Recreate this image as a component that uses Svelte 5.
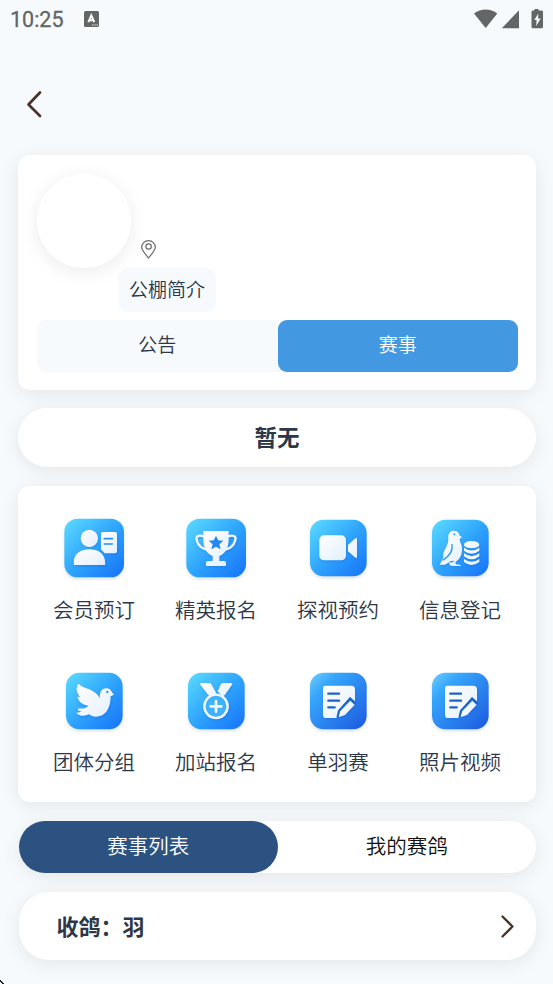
<script lang="ts">
	let section = $state('赛事');
	let tab = $state('赛事列表');

	const sections = ['公告', '赛事'];
	const tabs = ['赛事列表', '我的赛鸽'];

	const menu = [
		{ icon: 'member', label: '会员预订' },
		{ icon: 'trophy', label: '精英报名' },
		{ icon: 'video', label: '探视预约' },
		{ icon: 'register', label: '信息登记' },
		{ icon: 'dove', label: '团体分组' },
		{ icon: 'medal', label: '加站报名' },
		{ icon: 'note', label: '单羽赛' },
		{ icon: 'note', label: '照片视频' }
	];
</script>

<svg class="defs" width="0" height="0" aria-hidden="true">
	<defs>
		<linearGradient id="sky" x1="0" y1="0" x2="1" y2="1">
			<stop offset="0" stop-color="#5cdcff" />
			<stop offset="0.5" stop-color="#2fa5fd" />
			<stop offset="1" stop-color="#1672fa" />
		</linearGradient>
		<linearGradient id="deep" x1="0" y1="0" x2="1" y2="1">
			<stop offset="0" stop-color="#73cdff" />
			<stop offset="0.25" stop-color="#36a6fc" />
			<stop offset="1" stop-color="#1c58df" />
		</linearGradient>
		<linearGradient id="paper" x1="0" y1="0" x2="1" y2="1">
			<stop offset="0" stop-color="#ffffff" />
			<stop offset="1" stop-color="#e3effb" />
		</linearGradient>
	</defs>
</svg>

<div class="page">
	<header>
		<div class="status">
			<span class="time">10:25</span>
			<svg class="lang" width="15" height="16" viewBox="0 0 15 16">
				<rect width="15" height="16" rx="1.5" fill="#636665" />
				<path d="M4.3 11.2 7.3 4.3 10.3 11.2M5.4 9.2h3.8" fill="none" stroke="#fff" stroke-width="1.9" />
				<path d="M8 14h1.3M10.3 14h1.3M12.6 14h1.3" stroke="#fff" stroke-width="1.1" />
			</svg>
			<svg class="signals" width="70" height="20" viewBox="0 0 70 20" fill="#636665">
				<path d="M0 4.500C7-1 16.500-1 23.300 4.500L11.700 19Z" />
				<path d="M45 1.300V19.300H27.800Z" />
				<path d="M60.500 0h4v1.500h3q1.500 0 1.500 1.500v15q0 1.300-1.500 1.300h-8.600q-1.400 0-1.400-1.300V3q0-1.500 1.400-1.500h1.600Z" />
				<path d="M64.300 4.500 60.300 11h2.300l-.4 6 4.500-7.500h-2.600Z" fill="#f6fafd" />
			</svg>
		</div>
		<button class="back" aria-label="back">
			<svg width="16" height="28" viewBox="0 0 16 28">
				<path d="M14 2.500 2.500 14.500 14 26" fill="none" stroke="#4b3229" stroke-width="2.700" stroke-linecap="round" stroke-linejoin="round" />
			</svg>
		</button>
	</header>

	<main>
		<section class="card profile">
			<div class="top">
				<div class="avatar"></div>
				<svg class="pin" width="15" height="19" viewBox="0 0 15 19" fill="none" stroke="#6c6c6c" stroke-width="1.200">
					<path d="M7.500 18C4.500 13.800.7 10.500.7 7.200a6.800 6.500 0 0 1 13.600 0C14.300 10.500 10.500 13.800 7.500 18Z" />
					<circle cx="7.600" cy="6.500" r="2.700" />
				</svg>
			</div>
			<button class="intro">公棚简介</button>
			<div class="segments">
				{#each sections as name}
					<button class="segment" class:active={section === name} onclick={() => (section = name)}>{name}</button>
				{/each}
			</div>
		</section>

		<section class="card notice">暂无</section>

		<section class="card menu">
			{#each menu as item}
				<button class="item">
					<svg class="icon" viewBox="0 0 216 216">
						{#if item.icon === 'member' || item.icon === 'trophy'}
							<rect class="tile" x="19" y="20" width="179" height="176" rx="40" fill="url(#sky)" />
						{:else}
							<rect class="tile" x="24" y="23.500" width="170" height="169" rx="40" fill={item.icon === 'note' ? 'url(#deep)' : 'url(#sky)'} />
						{/if}
						{#if item.icon === 'member'}
							<g class="glyph" fill="url(#paper)">
								<circle cx="94" cy="79" r="26" />
								<path d="M48 159C43 127 66 112 94 112s51 15 47 47Z" />
								<path d="M135 60h36q6 0 6 6v52q0 6-6 6h-31l-11-12V66q0-6 6-6Z" />
							</g>
							<path d="M139 80h24M139 96h24" stroke="#238bf7" stroke-width="5" stroke-linecap="round" />
						{:else if item.icon === 'trophy'}
							<g class="glyph" fill="url(#paper)">
								<path d="M75 74C55 67 47 72 50 84c4 17 17 28 38 30M141 74c20-7 28-2 25 10-4 17-17 28-38 30" fill="none" stroke="#f4f9ff" stroke-width="7" />
								<path d="M70 57h76v26c0 27-13 44-28 49v15h14q6 0 6 7v8H78v-8q0-7 6-7h14v-15c-15-5-28-22-28-49Z" />
							</g>
							<path d="M108 71 114.500 85 130 86.500 118 97 122 112 108 104 94 112 98 97 86 86.500 101.500 85Z" fill="#2288ef" />
						{:else if item.icon === 'video'}
							<g class="glyph" fill="url(#paper)">
								<rect x="52" y="70" width="80" height="75" rx="14" />
								<path d="M138 99 160 79q5-3 5 4v50q0 7-5 4L138 118Z" />
							</g>
						{:else if item.icon === 'register'}
							<g class="glyph" fill="url(#paper)">
								<path d="M73 80C71 65 78 56 89 56c11 0 17 6 18 15l8 5-8 4c1 14 9 20 7 36-1 16-9 27-20 34l2 7 14 2v3H84l-7-3-2-8-12 7H47l11-21c-4-22 16-34 15-57Z" />
								<ellipse cx="143" cy="98" rx="23" ry="11" />
								<path d="M120 107q23 17 46 0v9q-23 18-46 0ZM120 124q23 17 46 0v9q-23 18-46 0ZM120 141q23 17 46 0v9q-23 18-46 0Z" />
							</g>
							<path d="M84 96C88 117 76 133 56 145M77 150l12-2" fill="none" stroke="#279bf7" stroke-width="4" />
							<circle cx="91" cy="67" r="3" fill="#279bf7" />
						{:else if item.icon === 'dove'}
							<path class="glyph" fill="url(#paper)" d="M61 57Q64 57 67 61C75 68 91 70 105 79c12 8 17 13 20 21 0-13 2-23 10-28 11-6 23-1 26 8l7 9-10 5c0 17-3 31-11 43-8 12-19 17-34 18-8 0-14-3-20-7-12 6-26 7-39-4l17-4-12-4 3-6c14 2 23-2 29-8-19-3-32-15-32-27l8 1C58 87 50 73 61 57Z" />
							<circle cx="148" cy="81" r="3.500" fill="#2691ef" />
						{:else if item.icon === 'medal'}
							<g class="glyph">
								<path d="M61 59q-3-5 4-5h24q4 0 6 5l14 26-18 8q-5-1-8-5ZM156 59q3-5-4-5h-24q-4 0-6 5l-9 20 14 15q5-1 8-5Z" fill="url(#paper)" />
								<circle cx="108" cy="124" r="35" fill="#3eb3fb" stroke="#f4f9ff" stroke-width="7" />
								<path d="M108 108v32M92 124h32" stroke="#f4f9ff" stroke-width="8" stroke-linecap="round" />
							</g>
						{:else}
							<path class="glyph" fill="url(#paper)" d="M70 62H148q11 0 11 11v36L144 96 109 137 105 159H72q-9 0-9-10V69q0-7 7-7Z" />
							<path class="glyph" fill="url(#paper)" d="M145 107 158 119 129 150 109 157 114 139Z" />
							<path d="M79 86h32M79 107h32M79 127h19" stroke="#1e63cc" stroke-width="7" stroke-linecap="round" />
							<path d="M106 158 111 137 144 101 161 117" fill="none" stroke="#1e63cc" stroke-width="6" />
						{/if}
					</svg>
					<span>{item.label}</span>
				</button>
			{/each}
		</section>

		<section class="card tabs">
			{#each tabs as name}
				<button class="tab" class:active={tab === name} onclick={() => (tab = name)}>{name}</button>
			{/each}
		</section>

		<section class="card race">
			<span>收鸽：羽</span>
			<svg width="14" height="24" viewBox="0 0 14 24">
				<path d="M2.500 2.500 12.500 12.500 2.500 22.500" fill="none" stroke="#4b3229" stroke-width="2.300" stroke-linecap="round" stroke-linejoin="round" />
			</svg>
		</section>
	</main>
	<svg class="corner" width="4" height="4" viewBox="0 0 4 4">
		<path d="M0 0h1v1h1v1h1v1h1v1H2V3H1V2H0Z" fill="#222" />
	</svg>
</div>

<style>
	:global(body) {
		background: #f6fafd;
	}
	.defs {
		position: absolute;
	}
	.page {
		position: relative;
		width: 553px;
		height: 984px;
		overflow: hidden;
		background: #f6fafd;
		color: #2d3748;
		font-family: 'Noto Sans CJK SC', sans-serif;
		font-weight: 350;
	}
	button {
		border: 0;
		padding: 0;
		margin: 0;
		background: transparent;
		color: inherit;
		font: inherit;
		cursor: pointer;
	}
	header {
		position: relative;
		z-index: 1;
		height: 140px;
		background: #f6fafd;
	}
	.status {
		display: flex;
		align-items: center;
		height: 37px;
		padding: 0 9px 0 10px;
	}
	.time {
		width: 74px;
		color: #636665;
		font: 400 21.5px/38px Roboto, sans-serif;
		-webkit-text-stroke: 0.3px #636665;
		padding-top: 2px;
	}
	.signals {
		margin-left: auto;
	}
	.back {
		display: block;
		margin: 53px 0 0 26px;
		height: 28px;
	}
	.back svg {
		display: block;
	}
	main {
		display: flex;
		flex-direction: column;
		padding: 15px 17px 0 18px;
	}
	.card {
		box-sizing: border-box;
		background: #fff;
		border-radius: 12px;
		box-shadow: 0 4px 19px rgba(0, 0, 0, 0.08);
	}
	.profile {
		height: 235px;
		padding: 19px 18px 0 19px;
	}
	.top {
		display: flex;
		align-items: flex-end;
		gap: 10px;
	}
	.avatar {
		width: 94px;
		height: 94px;
		border-radius: 50%;
		box-shadow: 0 4px 19px rgba(0, 0, 0, 0.08);
	}
	.pin {
		margin-bottom: 9px;
	}
	.intro {
		display: block;
		width: 98px;
		height: 44px;
		margin-left: 81px;
		padding-bottom: 2px;
		border-radius: 10px;
		background: #f6fafd;
		font-size: 19px;
		line-height: 42px;
	}
	.segments {
		display: flex;
		height: 51.5px;
		margin-top: 8px;
		border-radius: 9px;
		background: #f6fafd;
	}
	.segment {
		flex: 1;
		border-radius: 9px;
		font-size: 19px;
		line-height: 48px;
		padding-bottom: 3px;
	}
	.segment.active {
		background: #4299e1;
		color: #fff;
	}
	.notice {
		height: 59px;
		margin-top: 18px;
		border-radius: 30px;
		text-align: center;
		font-size: 22.5px;
		font-weight: 700;
		line-height: 56px;
	}
	.menu {
		display: grid;
		grid-template-columns: repeat(4, 122px);
		grid-auto-rows: 153px;
		height: 316px;
		margin-top: 19px;
		padding: 26px 15px 0;
	}
	.item {
		display: flex;
		flex-direction: column;
		align-items: center;
		font-size: 20.5px;
		line-height: 30px;
	}
	.icon {
		width: 72px;
		height: 72px;
		margin-bottom: 10px;
	}
	.item:nth-child(n + 5) .icon {
		margin-bottom: 9px;
	}
	.tile {
		filter: drop-shadow(0 6px 5px rgba(40, 80, 130, 0.16));
	}
	.glyph {
		filter: drop-shadow(2px 4px 3px rgba(10, 80, 190, 0.25));
	}
	.tabs {
		display: flex;
		height: 52px;
		margin: 19px 0 0 1px;
		border-radius: 26px;
	}
	.tab {
		flex: 1;
		border-radius: 26px;
		color: #111;
		font-size: 20.5px;
		line-height: 48px;
		padding-bottom: 4px;
	}
	.tab.active {
		background: #2c5282;
		color: #fff;
	}
	.race {
		display: flex;
		align-items: center;
		justify-content: space-between;
		height: 68px;
		margin: 19px 0 0 1px;
		padding: 0 22px 0 37.5px;
		border-radius: 30px;
		font-size: 22px;
		font-weight: 700;
	}
	.race span {
		padding-bottom: 2px;
	}
	.corner {
		position: absolute;
		left: 0;
		bottom: 0;
	}
</style>
